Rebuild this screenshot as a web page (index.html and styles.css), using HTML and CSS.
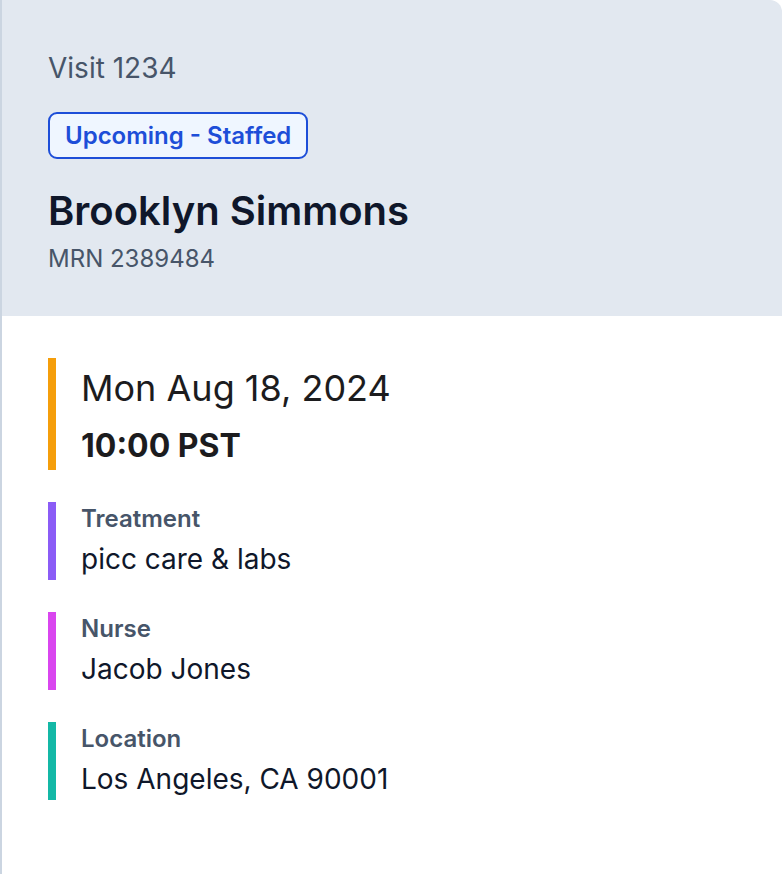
FILE: index.html
```html
<!DOCTYPE html>
<html>
<head>
<meta charset="utf-8">
<link rel="stylesheet" href="styles.css">
</head>
<body>
<div class="card">
  <div class="header">
    <div class="visit">Visit 1234</div>
    <div class="badge">Upcoming - Staffed</div>
    <div class="name">Brooklyn Simmons</div>
    <div class="mrn">MRN 2389484</div>
  </div>
  <div class="body">
    <div class="item item-date">
      <div class="date">Mon Aug 18, 2024</div>
      <div class="time">10:00 PST</div>
    </div>
    <div class="item item-treatment">
      <div class="label">Treatment</div>
      <div class="value">picc care &amp; labs</div>
    </div>
    <div class="item item-nurse">
      <div class="label">Nurse</div>
      <div class="value">Jacob Jones</div>
    </div>
    <div class="item item-location">
      <div class="label">Location</div>
      <div class="value">Los Angeles, CA 90001</div>
    </div>
  </div>
</div>
</body>
</html>
```
FILE: styles.css
```css
html, body {
  margin: 0;
  padding: 0;
  background: #ffffff;
}
body {
  font-family: Inter, "Noto Sans", sans-serif;
  width: 784px;
  height: 874px;
  overflow: hidden;
}
.card {
  width: 780px;
  height: 874px;
  border-left: 2px solid #cbd5e1;
  border-top-right-radius: 12px;
  overflow: hidden;
  background: #ffffff;
}
.header {
  background: #e2e8f0;
  height: 316px;
  box-sizing: border-box;
  padding: 50px 46px 0;
}
.visit {
  font-size: 28px;
  line-height: 36px;
  color: #475569;
}
.badge {
  display: inline-block;
  margin-top: 26px;
  border: 2px solid #1d4ed8;
  border-radius: 9px;
  background: #eff6ff;
  color: #1d4ed8;
  font-size: 24px;
  font-weight: 600;
  line-height: 29px;
  padding: 7px 15px;
}
.name {
  margin-top: 28px;
  font-size: 40px;
  font-weight: 600;
  line-height: 48px;
  color: #0f172a;
}
.mrn {
  margin-top: 8px;
  font-size: 24px;
  line-height: 32px;
  color: #475569;
}
.body {
  padding: 42px 46px 0;
  display: flex;
  flex-direction: column;
  gap: 32px;
}
.item {
  border-left: 8px solid #f59e0b;
  padding-left: 25px;
  padding-top: 2px;
  box-sizing: border-box;
  display: flex;
  flex-direction: column;
  height: 78px;
}
.item-date { height: 112px; padding-top: 8px; }
.item-treatment { border-left-color: #8b5cf6; }
.item-nurse { border-left-color: #d946ef; }
.item-location { border-left-color: #14b8a6; }
.date {
  font-size: 36px;
  line-height: 44px;
  color: #1c1c1e;
}
.time {
  margin-top: 16px;
  font-size: 32px;
  font-weight: 700;
  line-height: 40px;
  color: #1c1c1e;
}
.label {
  font-size: 24px;
  font-weight: 600;
  line-height: 30px;
  color: #475569;
}
.value {
  margin-top: 7px;
  font-size: 28px;
  line-height: 36px;
  color: #0f172a;
}
```
